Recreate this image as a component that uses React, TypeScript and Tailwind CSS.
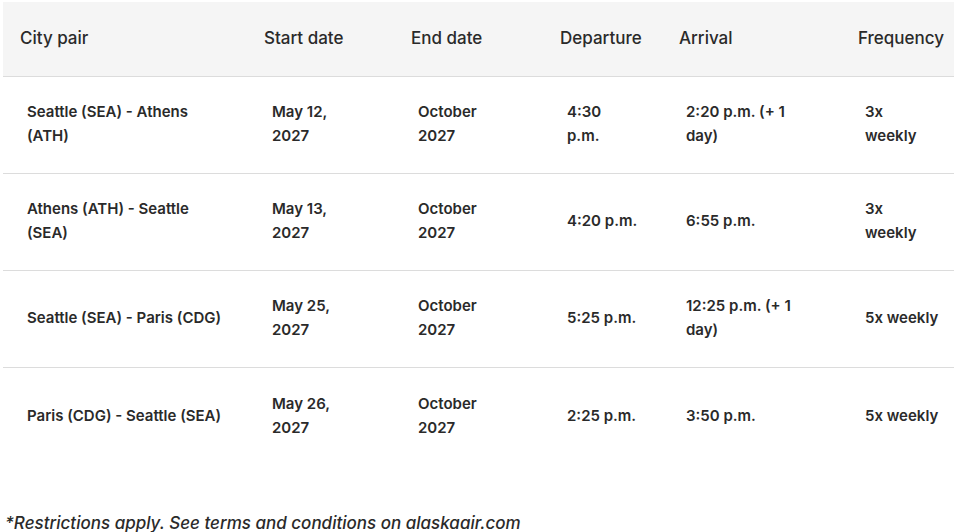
import React from 'react';

const rows = [
  {
    city: ['Seattle (SEA) - Athens', '(ATH)'],
    start: ['May 12,', '2027'],
    end: ['October', '2027'],
    dep: ['4:30', 'p.m.'],
    arr: ['2:20 p.m. (+ 1', 'day)'],
    freq: ['3x', 'weekly'],
  },
  {
    city: ['Athens (ATH) - Seattle', '(SEA)'],
    start: ['May 13,', '2027'],
    end: ['October', '2027'],
    dep: ['4:20 p.m.'],
    arr: ['6:55 p.m.'],
    freq: ['3x', 'weekly'],
  },
  {
    city: ['Seattle (SEA) - Paris (CDG)'],
    start: ['May 25,', '2027'],
    end: ['October', '2027'],
    dep: ['5:25 p.m.'],
    arr: ['12:25 p.m. (+ 1', 'day)'],
    freq: ['5x weekly'],
  },
  {
    city: ['Paris (CDG) - Seattle (SEA)'],
    start: ['May 26,', '2027'],
    end: ['October', '2027'],
    dep: ['2:25 p.m.'],
    arr: ['3:50 p.m.'],
    freq: ['5x weekly'],
  },
];

const cols = 'grid grid-cols-[244px_147px_149px_119px_179px_113px]';

const Cell = ({ lines, pl = 'pl-6' }: { lines: string[]; pl?: string }) => (
  <div className={`flex items-center ${pl} pr-2 pb-[2px]`}>
    <div className="whitespace-nowrap">
      {lines.map((l, i) => (
        <div key={i}>{l}</div>
      ))}
    </div>
  </div>
);

export default function App() {
  return (
    <div
      className="w-[954px] h-[532px] bg-white text-[#2a2a2a] overflow-hidden"
      style={{ fontFamily: 'Inter, "Open Sans", sans-serif' }}
    >
      <div className="pt-[2px] pl-[3px]">
        <div className={`${cols} h-[75px] bg-[#f5f5f5] border-b border-[#dcdcdc] text-[17px] font-medium items-center`}>
          <div className="pl-[17px]">City pair</div>
          <div className="pl-[17px]">Start date</div>
          <div className="pl-[17px]">End date</div>
          <div className="pl-[17px]">Departure</div>
          <div className="pl-[17px]">Arrival</div>
          <div className="pl-[17px] whitespace-nowrap">Frequency</div>
        </div>
        {rows.map((r, i) => (
          <div
            key={i}
            className={`${cols} h-[97px] text-[15px] leading-6 font-semibold ${i < rows.length - 1 ? 'border-b border-[#dcdcdc]' : ''}`}
          >
            <Cell lines={r.city} />
            <Cell lines={r.start} pl="pl-[25px]" />
            <Cell lines={r.end} />
            <Cell lines={r.dep} />
            <Cell lines={r.arr} />
            <Cell lines={r.freq} />
          </div>
        ))}
      </div>
      <p className="mt-[46px] pl-[5px] text-[17px] italic font-medium">
        *Restrictions apply. See terms and conditions on alaskaair.com
      </p>
    </div>
  );
}
